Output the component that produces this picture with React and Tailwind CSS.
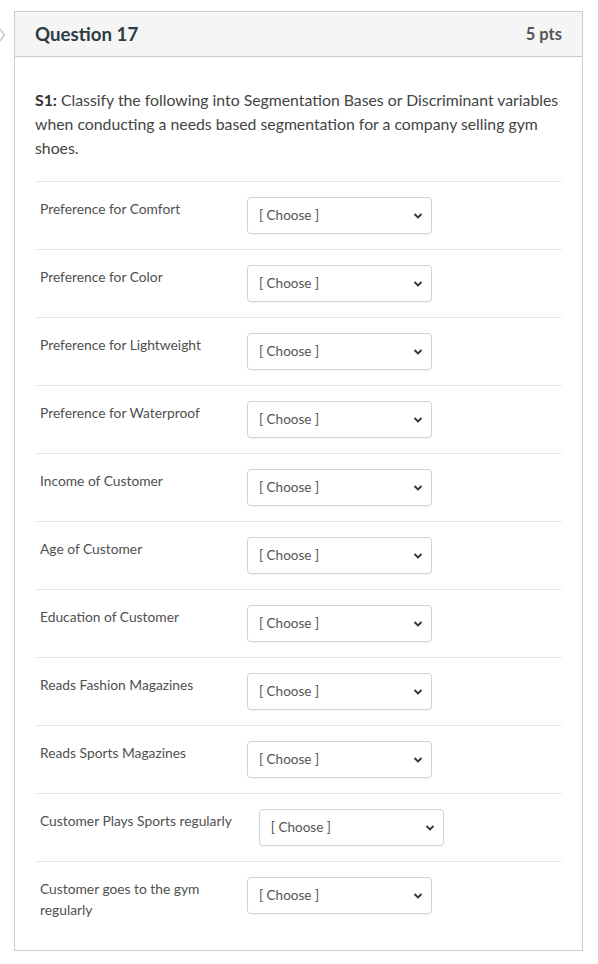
const rows = [
  "Preference for Comfort",
  "Preference for Color",
  "Preference for Lightweight",
  "Preference for Waterproof",
  "Income of Customer",
  "Age of Customer",
  "Education of Customer",
  "Reads Fashion Magazines",
  "Reads Sports Magazines",
  "Customer Plays Sports regularly",
  "Customer goes to the gym regularly",
];

const Row = ({ label, last }) => (
  <div className={`flex items-start pl-[5px] pt-[15px] pb-[15px] ${last ? "" : "border-b border-[#e8e8e8]"}`}>
    <div
      className={`min-w-[180px] pt-[1px] text-[13.8px] leading-[21px] text-[#505050] ${
        last ? "max-w-[180px]" : "whitespace-nowrap"
      }`}
    >
      {label}
    </div>
    <div className="ml-[27px] flex h-[37px] w-[185px] items-center justify-between rounded-[4px] border border-[#cfd4d8] bg-white pl-[11px] pr-[8px] shadow-[0_1px_1px_rgba(0,0,0,0.05)]">
      <span className="text-[13.5px] text-[#555]">[ Choose ]</span>
      <svg width="10" height="8" viewBox="0 0 10 8">
        <path d="M1.5 2 L5 5.5 L8.5 2" fill="none" stroke="#333" strokeWidth="1.8" />
      </svg>
    </div>
  </div>
);

export default function App() {
  return (
    <div className="flex min-h-[964px] w-[598px] bg-white pt-[11px]" style={{ fontFamily: "Lato, 'Open Sans', sans-serif" }}>
      <div className="w-[14px] pt-[16px]">
        <svg width="6" height="16" viewBox="0 0 6 16">
          <path d="M0 2 L4.5 8 L0 14" fill="none" stroke="#b9c4cc" strokeWidth="1.3" />
        </svg>
      </div>
      <div className="h-[940px] w-[569px] border border-[#c7cdd1] bg-white">
        <div className="flex h-[45px] items-center justify-between border-b border-[#c7cdd1] bg-[#f5f5f5] px-[20px]">
          <span className="text-[18.7px] font-bold text-[#2d3b45]">Question 17</span>
          <span className="text-[16.5px] font-bold text-[#555]">5 pts</span>
        </div>
        <div className="px-[20px] pt-[31px]">
          <p className="text-[15.8px] leading-[24px] text-[#444]">
            <strong className="font-bold text-[#333]">S1:</strong> Classify the following into Segmentation Bases or Discriminant variables when conducting a needs based segmentation for a company selling gym shoes.
          </p>
          <div className="mt-[21px] border-t border-[#e8e8e8]">
            {rows.map((r, i) => (
              <Row key={r} label={r} last={i === rows.length - 1} />
            ))}
          </div>
        </div>
      </div>
    </div>
  );
}
